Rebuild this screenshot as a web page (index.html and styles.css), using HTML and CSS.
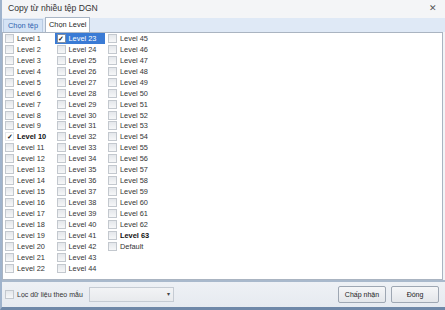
FILE: index.html
```html
<!DOCTYPE html>
<html lang="vi">
<head>
    <meta charset="UTF-8">
    <title>Copy từ nhiều tệp DGN</title>
    <link rel="stylesheet" href="styles.css">
</head>
<body>
<div class="window">
    <div class="titlebar">
        <span class="title">Copy từ nhiều tệp DGN</span>
        <span class="close">✕</span>
    </div>
    <div class="tabs">
        <div class="tab">Chọn tệp</div>
        <div class="tab active">Chọn Level</div>
    </div>
    <div class="panel">
        <div class="col">
            <div class="item"><span class="box"></span>Level 1</div>
            <div class="item"><span class="box"></span>Level 2</div>
            <div class="item"><span class="box"></span>Level 3</div>
            <div class="item"><span class="box"></span>Level 4</div>
            <div class="item"><span class="box"></span>Level 5</div>
            <div class="item"><span class="box"></span>Level 6</div>
            <div class="item"><span class="box"></span>Level 7</div>
            <div class="item"><span class="box"></span>Level 8</div>
            <div class="item"><span class="box"></span>Level 9</div>
            <div class="item bold"><span class="box checked plain">✓</span>Level 10</div>
            <div class="item"><span class="box"></span>Level 11</div>
            <div class="item"><span class="box"></span>Level 12</div>
            <div class="item"><span class="box"></span>Level 13</div>
            <div class="item"><span class="box"></span>Level 14</div>
            <div class="item"><span class="box"></span>Level 15</div>
            <div class="item"><span class="box"></span>Level 16</div>
            <div class="item"><span class="box"></span>Level 17</div>
            <div class="item"><span class="box"></span>Level 18</div>
            <div class="item"><span class="box"></span>Level 19</div>
            <div class="item"><span class="box"></span>Level 20</div>
            <div class="item"><span class="box"></span>Level 21</div>
            <div class="item"><span class="box"></span>Level 22</div>
        </div>
        <div class="col">
            <div class="item selected"><span class="box checked">✓</span>Level 23</div>
            <div class="item"><span class="box"></span>Level 24</div>
            <div class="item"><span class="box"></span>Level 25</div>
            <div class="item"><span class="box"></span>Level 26</div>
            <div class="item"><span class="box"></span>Level 27</div>
            <div class="item"><span class="box"></span>Level 28</div>
            <div class="item"><span class="box"></span>Level 29</div>
            <div class="item"><span class="box"></span>Level 30</div>
            <div class="item"><span class="box"></span>Level 31</div>
            <div class="item"><span class="box"></span>Level 32</div>
            <div class="item"><span class="box"></span>Level 33</div>
            <div class="item"><span class="box"></span>Level 34</div>
            <div class="item"><span class="box"></span>Level 35</div>
            <div class="item"><span class="box"></span>Level 36</div>
            <div class="item"><span class="box"></span>Level 37</div>
            <div class="item"><span class="box"></span>Level 38</div>
            <div class="item"><span class="box"></span>Level 39</div>
            <div class="item"><span class="box"></span>Level 40</div>
            <div class="item"><span class="box"></span>Level 41</div>
            <div class="item"><span class="box"></span>Level 42</div>
            <div class="item"><span class="box"></span>Level 43</div>
            <div class="item"><span class="box"></span>Level 44</div>
        </div>
        <div class="col">
            <div class="item"><span class="box"></span>Level 45</div>
            <div class="item"><span class="box"></span>Level 46</div>
            <div class="item"><span class="box"></span>Level 47</div>
            <div class="item"><span class="box"></span>Level 48</div>
            <div class="item"><span class="box"></span>Level 49</div>
            <div class="item"><span class="box"></span>Level 50</div>
            <div class="item"><span class="box"></span>Level 51</div>
            <div class="item"><span class="box"></span>Level 52</div>
            <div class="item"><span class="box"></span>Level 53</div>
            <div class="item"><span class="box"></span>Level 54</div>
            <div class="item"><span class="box"></span>Level 55</div>
            <div class="item"><span class="box"></span>Level 56</div>
            <div class="item"><span class="box"></span>Level 57</div>
            <div class="item"><span class="box"></span>Level 58</div>
            <div class="item"><span class="box"></span>Level 59</div>
            <div class="item"><span class="box"></span>Level 60</div>
            <div class="item"><span class="box"></span>Level 61</div>
            <div class="item"><span class="box"></span>Level 62</div>
            <div class="item bold"><span class="box"></span>Level 63</div>
            <div class="item"><span class="box"></span>Default</div>
        </div>
    </div>
    <div class="footer">
        <div class="item filter"><span class="box"></span>Lọc dữ liệu theo mẫu</div>
        <div class="combo"><span class="arrow">▾</span></div>
        <div class="spacer"></div>
        <button class="btn">Chấp nhận</button>
        <button class="btn">Đóng</button>
    </div>
</div>
</body>
</html>
```

FILE: styles.css
```css
body { margin: 0; font-family: "Liberation Sans", Arial, sans-serif; color: #222; }
.window { width: 445px; height: 310px; display: flex; flex-direction: column; background: #f2f4f7; border-left: 2px solid #9fb3cc; border-bottom: 3px solid #6f88a8; box-sizing: border-box; }
.titlebar { height: 18px; display: flex; align-items: center; justify-content: space-between; padding: 0 8px 2px 6px; background: #f4f5f7; box-sizing: border-box; }
.title { font-size: 8.6px; color: #333; }
.close { font-size: 9px; color: #555; }
.tabs { height: 14px; display: flex; align-items: flex-end; padding-left: 1px; background: #dfe9f6; gap: 2px; }
.tab { height: 12px; padding: 0 4px; font-size: 7.4px; line-height: 12px; color: #2d5fae; background: #d4e3f5; border: 1px solid #b9cbe2; border-bottom: none; }
.tab.active { height: 14px; line-height: 14px; padding: 0 3px; color: #222; background: #fff; border-color: #a9b6c6; }
.panel { height: 248px; display: flex; align-items: flex-start; background: #fff; border: 1px solid #aab4c1; margin-right: 2px; box-sizing: border-box; }
.col { width: 51.5px; display: flex; flex-direction: column; }
.item { height: 10.95px; display: flex; align-items: center; gap: 3px; font-size: 7.4px; color: #333; white-space: nowrap; padding-left: 2px; }
.item.bold { font-weight: bold; color: #111; }
.item.selected { background: #3a7bd5; color: #fff; margin-right: 1px; }
.box { width: 7px; height: 7px; flex: none; border: 1px solid #c3c8ce; background: linear-gradient(#e4e7eb, #f6f7f8); display: flex; align-items: center; justify-content: center; font-size: 7px; line-height: 1; color: #222; }
.box.checked { background: #fff; border-color: #7c8ea6; font-weight: bold; }
.box.plain { border-color: #e4e6ea; background: #fff; }
.footer { flex: 1; display: flex; align-items: center; gap: 6px; padding: 0 6px 0 1px; background: linear-gradient(#eef1f5, #e6eaf0); border-top: 2px solid #a9b9cc; }
.filter { height: auto; font-size: 7px; }
.combo { width: 83px; height: 13px; position: relative; background: linear-gradient(#f2f3f5, #e8eaed); border: 1px solid #c5cbd3; }
.arrow { position: absolute; right: 3px; top: 2px; font-size: 6px; color: #444; }
.spacer { flex: 1; }
.btn { width: 48px; height: 17px; margin-left: -1px; font-family: "Liberation Sans", Arial, sans-serif; font-size: 7px; color: #222; background: linear-gradient(#f5f6f8, #e3e6ea); border: 1px solid #9ea7b3; border-radius: 2px; padding: 0; }
```
